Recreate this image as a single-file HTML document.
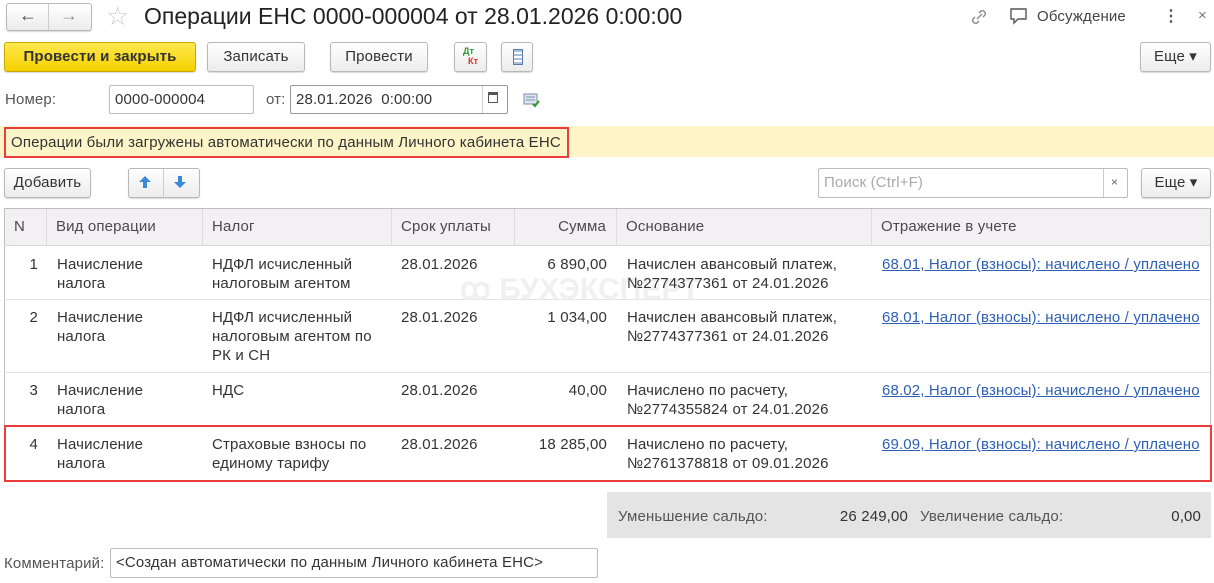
<!DOCTYPE html><html><head><meta charset="utf-8"><style>
*{box-sizing:border-box;margin:0;padding:0}
body{width:1214px;height:583px;background:#fff;font-family:"Liberation Sans",Arial,sans-serif;font-size:15px;letter-spacing:.15px;color:#333;position:relative;overflow:hidden}
.a{position:absolute;white-space:nowrap}
.btn{position:absolute;border:1px solid #b8b8b8;border-radius:3px;background:linear-gradient(#fff,#ececec);box-shadow:0 1px 1px rgba(0,0,0,.15);text-align:center;color:#333;white-space:nowrap}
.inp{position:absolute;border:1px solid #bcbcbc;border-radius:2px;background:#fff;padding-left:5px;white-space:nowrap}
.hd{position:absolute;top:209px;height:36px;background:#f2f0f3;border-right:1px solid #dcdcdc;line-height:36px;padding-left:9px;color:#4a4a4a}
.c{position:absolute;line-height:19px;color:#333;white-space:nowrap}
.lnk{color:#2d5fb5;text-decoration:underline}
.hl{position:absolute;left:4px;width:1206px;height:1px;background:#e4e4e4}
</style></head><body>
<div class="btn" style="left:6px;top:3px;width:86px;height:28px"></div>
<div class="a" style="left:48px;top:4px;width:1px;height:26px;background:#ccc"></div>
<div class="a" style="left:19px;top:5px;font-size:18px;color:#444">&#8592;</div>
<div class="a" style="left:60px;top:5px;font-size:18px;color:#999">&#8594;</div>
<div class="a" style="left:106px;top:1px;font-size:26px;color:#ccc">&#9734;</div>
<div class="a" style="left:144px;top:3px;font-size:23px;letter-spacing:0;color:#222">Операции ЕНС 0000-000004 от 28.01.2026 0:00:00</div>
<svg class="a" style="left:969px;top:7px" width="20" height="20"><path d="M8 12l5-5M6 10l-2 2a3 3 0 004 4l2-2M14 10l2-2a3 3 0 00-4-4l-2 2" fill="none" stroke="#888" stroke-width="1.4"/></svg>
<svg class="a" style="left:1009px;top:8px" width="20" height="18"><path d="M2 1h15v10H9l-4 4v-4H2z" fill="none" stroke="#555" stroke-width="1.4"/></svg>
<div class="a" style="left:1037px;top:8px;color:#444">Обсуждение</div>
<div class="a" style="left:1163px;top:6px;font-size:16px;color:#555;font-weight:bold">&#8942;</div>
<div class="a" style="left:1198px;top:7px;font-size:15px;color:#777">×</div>

<div class="btn" style="left:4px;top:42px;width:192px;height:30px;background:linear-gradient(#ffe94d,#f5d000);border-color:#c9a800;line-height:28px;font-weight:bold;font-size:15px">Провести и закрыть</div>
<div class="btn" style="left:207px;top:42px;width:98px;height:30px;line-height:28px">Записать</div>
<div class="btn" style="left:330px;top:42px;width:98px;height:30px;line-height:28px">Провести</div>
<div class="btn" style="left:454px;top:42px;width:33px;height:30px"><span class="a" style="left:8px;top:3px;font-size:9px;color:#2a9a2a;font-weight:bold">Дт</span><span class="a" style="left:13px;top:13px;font-size:9px;color:#e03030;font-weight:bold">Кт</span></div>
<div class="btn" style="left:501px;top:42px;width:32px;height:30px"><div class="a" style="left:11px;top:6px;width:10px;height:16px;border:1px solid #5a7da8;background:repeating-linear-gradient(#a8c0dc 0 2px,#fff 2px 4px)"></div></div>
<div class="btn" style="left:1140px;top:42px;width:71px;height:30px;line-height:28px">Еще ▾</div>

<div class="a" style="left:5px;top:91px;color:#555">Номер:</div>
<div class="inp" style="left:109px;top:85px;width:145px;height:29px;line-height:27px">0000-000004</div>
<div class="a" style="left:266px;top:91px;color:#555">от:</div>
<div class="inp" style="left:290px;top:85px;width:218px;height:29px;line-height:27px;border-color:#999">28.01.2026&nbsp; 0:00:00</div>
<div class="a" style="left:482px;top:86px;width:1px;height:27px;background:#ccc"></div>
<div class="a" style="left:488px;top:92px;width:10px;height:11px;border:1px solid #555;border-top-width:3px"></div>
<svg class="a" style="left:523px;top:92px" width="18" height="16"><rect x="1" y="2" width="13" height="10" fill="#dde6f0" stroke="#7a8fa8"/><path d="M3 5h9M3 8h9" stroke="#7a8fa8"/><path d="M10 12l2 2 4-5" stroke="#2a9a2a" stroke-width="2" fill="none"/></svg>

<div class="a" style="left:0;top:126px;width:1214px;height:31px;background:#fdf5c8"></div>
<div class="a" style="left:4px;top:127px;width:565px;height:31px;border:2px solid #ec3c3c;line-height:27px;padding-left:5px;color:#333">Операции были загружены автоматически по данным Личного кабинета ЕНС</div>

<div class="btn" style="left:4px;top:168px;width:87px;height:30px;line-height:28px">Добавить</div>
<div class="btn" style="left:128px;top:168px;width:72px;height:30px"></div>
<div class="a" style="left:163px;top:169px;width:1px;height:28px;background:#ccc"></div>
<svg class="a" style="left:138px;top:175px" width="14" height="14"><path d="M7 1L1 7h4v6h4V7h4z" fill="#3a8ad8"/></svg>
<svg class="a" style="left:173px;top:175px" width="14" height="14"><path d="M7 13L1 7h4V1h4v6h4z" fill="#3a8ad8"/></svg>
<div class="inp" style="left:818px;top:168px;width:310px;height:30px;line-height:28px;color:#aaa">Поиск (Ctrl+F)</div>
<div class="a" style="left:1103px;top:169px;width:1px;height:28px;background:#ccc"></div>
<div class="a" style="left:1111px;top:175px;font-size:12px;color:#666">×</div>
<div class="btn" style="left:1141px;top:168px;width:70px;height:30px;line-height:28px">Еще ▾</div>

<div class="a" style="left:4px;top:208px;width:1207px;height:273px;border:1px solid #bdbdbd"></div>
<div class="hd" style="left:5px;width:42px">N</div>
<div class="hd" style="left:47px;width:156px">Вид операции</div>
<div class="hd" style="left:203px;width:189px">Налог</div>
<div class="hd" style="left:392px;width:123px">Срок уплаты</div>
<div class="hd" style="left:515px;width:102px;text-align:right;padding-right:10px">Сумма</div>
<div class="hd" style="left:617px;width:255px">Основание</div>
<div class="hd" style="left:872px;width:338px;border-right:0">Отражение в учете</div>
<div class="hl" style="top:245px;background:#d8d8d8"></div>
<div class="hl" style="top:299px"></div>
<div class="hl" style="top:372px"></div>
<div class="a" style="left:460px;top:272px;font-size:30px;font-weight:bold;color:#f0f0f0">ꝏ БУХЭКСПЕРТ</div>

<div class="c" style="left:20px;top:255px;width:18px;text-align:right">1</div>
<div class="c" style="left:57px;top:255px">Начисление<br>налога</div>
<div class="c" style="left:212px;top:255px">НДФЛ исчисленный<br>налоговым агентом</div>
<div class="c" style="left:401px;top:255px">28.01.2026</div>
<div class="c" style="left:505px;top:255px;width:102px;text-align:right">6 890,00</div>
<div class="c" style="left:627px;top:255px">Начислен авансовый платеж,<br>№2774377361 от 24.01.2026</div>
<div class="c lnk" style="left:882px;top:255px">68.01, Налог (взносы): начислено / уплачено</div>

<div class="c" style="left:20px;top:308px;width:18px;text-align:right">2</div>
<div class="c" style="left:57px;top:308px">Начисление<br>налога</div>
<div class="c" style="left:212px;top:308px">НДФЛ исчисленный<br>налоговым агентом по<br>РК и СН</div>
<div class="c" style="left:401px;top:308px">28.01.2026</div>
<div class="c" style="left:505px;top:308px;width:102px;text-align:right">1 034,00</div>
<div class="c" style="left:627px;top:308px">Начислен авансовый платеж,<br>№2774377361 от 24.01.2026</div>
<div class="c lnk" style="left:882px;top:308px">68.01, Налог (взносы): начислено / уплачено</div>

<div class="c" style="left:20px;top:381px;width:18px;text-align:right">3</div>
<div class="c" style="left:57px;top:381px">Начисление<br>налога</div>
<div class="c" style="left:212px;top:381px">НДС</div>
<div class="c" style="left:401px;top:381px">28.01.2026</div>
<div class="c" style="left:505px;top:381px;width:102px;text-align:right">40,00</div>
<div class="c" style="left:627px;top:381px">Начислено по расчету,<br>№2774355824 от 24.01.2026</div>
<div class="c lnk" style="left:882px;top:381px">68.02, Налог (взносы): начислено / уплачено</div>

<div class="a" style="left:4px;top:425px;width:1208px;height:57px;border:2px solid #ec3c3c"></div>
<div class="c" style="left:20px;top:435px;width:18px;text-align:right">4</div>
<div class="c" style="left:57px;top:435px">Начисление<br>налога</div>
<div class="c" style="left:212px;top:435px">Страховые взносы по<br>единому тарифу</div>
<div class="c" style="left:401px;top:435px">28.01.2026</div>
<div class="c" style="left:505px;top:435px;width:102px;text-align:right">18 285,00</div>
<div class="c" style="left:627px;top:435px">Начислено по расчету,<br>№2761378818 от 09.01.2026</div>
<div class="c lnk" style="left:882px;top:435px">69.09, Налог (взносы): начислено / уплачено</div>

<div class="a" style="left:607px;top:492px;width:604px;height:46px;background:#e4e4e4"></div>
<div class="a" style="left:618px;top:508px;color:#555">Уменьшение сальдо:</div>
<div class="a" style="left:790px;top:508px;width:118px;text-align:right;color:#333">26 249,00</div>
<div class="a" style="left:920px;top:508px;color:#555">Увеличение сальдо:</div>
<div class="a" style="left:1100px;top:508px;width:101px;text-align:right;color:#333">0,00</div>

<div class="a" style="left:4px;top:555px;color:#555">Комментарий:</div>
<div class="inp" style="left:110px;top:548px;width:488px;height:30px;line-height:28px">&lt;Создан автоматически по данным Личного кабинета ЕНС&gt;</div>
</body></html>
